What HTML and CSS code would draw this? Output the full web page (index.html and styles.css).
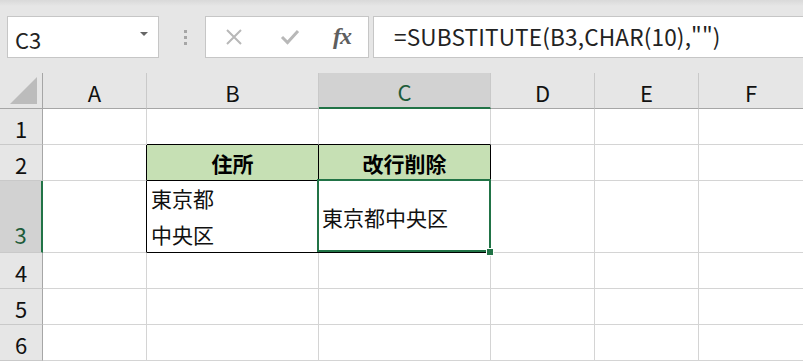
FILE: index.html
```html
<!DOCTYPE html>
<html lang="ja">
<head>
<meta charset="utf-8">
<link rel="stylesheet" href="styles.css">
</head>
<body>
<div class="app">
  <div class="toolbar">
    <div class="namebox"><span class="ref">C3</span><span class="caret"></span></div>
    <div class="grip"><i></i><i></i><i></i></div>
    <div class="fbtns">
      <svg class="ico" width="18" height="18" viewBox="0 0 18 18"><path d="M2 2 L16 16 M16 2 L2 16" stroke="#b8b8b8" stroke-width="2" fill="none"/></svg>
      <svg class="ico" width="20" height="18" viewBox="0 0 20 18"><path d="M2 9 L7.5 14.5 L18 3" stroke="#b8b8b8" stroke-width="3" fill="none"/></svg>
      <span class="fx">fx</span>
    </div>
    <div class="formula">=SUBSTITUTE(B3,CHAR(10),"")</div>
  </div>
  <div class="sheet">
    <div class="hd corner"><svg width="30" height="30" viewBox="0 0 30 30"><polygon points="28,2 28,29 1,29" fill="#bcbcbc"/></svg></div>
    <div class="hd col">A</div>
    <div class="hd col">B</div>
    <div class="hd col sel-col">C</div>
    <div class="hd col">D</div>
    <div class="hd col">E</div>
    <div class="hd col last">F</div>

    <div class="hd row">1</div>
    <div class="c"></div>
    <div class="c bb"></div>
    <div class="c bb"></div>
    <div class="c"></div>
    <div class="c"></div>
    <div class="c last"></div>

    <div class="hd row">2</div>
    <div class="c br"></div>
    <div class="c head bl">住所</div>
    <div class="c head bl">改行削除</div>
    <div class="c"></div>
    <div class="c"></div>
    <div class="c last"></div>

    <div class="hd row sel-row">3</div>
    <div class="c br"></div>
    <div class="c bl multi"><span>東京都</span><span>中央区</span></div>
    <div class="c bl active"><span class="txt">東京都中央区</span><span class="handle"></span></div>
    <div class="c"></div>
    <div class="c"></div>
    <div class="c last"></div>

    <div class="hd row">4</div>
    <div class="c"></div>
    <div class="c"></div>
    <div class="c"></div>
    <div class="c"></div>
    <div class="c"></div>
    <div class="c last"></div>

    <div class="hd row">5</div>
    <div class="c"></div>
    <div class="c"></div>
    <div class="c"></div>
    <div class="c"></div>
    <div class="c"></div>
    <div class="c last"></div>

    <div class="hd row">6</div>
    <div class="c"></div>
    <div class="c"></div>
    <div class="c"></div>
    <div class="c"></div>
    <div class="c"></div>
    <div class="c last"></div>
  </div>
</div>
</body>
</html>
```

FILE: styles.css
```css
* { box-sizing: border-box; }
html, body { margin: 0; padding: 0; }
body {
  width: 803px;
  height: 361px;
  overflow: hidden;
  background: #e6e6e6;
  font-family: "Noto Sans CJK JP", "Noto Sans", sans-serif;
  color: #000;
}
.app { width: 803px; height: 361px; display: flex; flex-direction: column; }

.toolbar {
  height: 73px;
  flex: none;
  display: flex;
  align-items: flex-start;
  padding-top: 16px;
  background: linear-gradient(#d9d9d9 0, #e6e6e6 6px, #e6e6e6 100%);
}
.namebox {
  margin-left: 7px;
  width: 152px;
  height: 42px;
  background: #fff;
  border: 1px solid #c6c6c6;
  display: flex;
  align-items: center;
  justify-content: space-between;
  padding: 0 10px 0 7px;
}
.ref { font-size: 22px; color: #222; line-height: 1; position: relative; top: 2px; }
.caret {
  width: 0; height: 0;
  border-left: 4px solid transparent;
  border-right: 4px solid transparent;
  border-top: 4px solid #666;
  margin-top: -6px;
}
.grip {
  width: 46px;
  height: 42px;
  display: flex;
  flex-direction: column;
  align-items: center;
  justify-content: center;
  gap: 3px;
}
.grip i { display: block; width: 3px; height: 3px; background: #a6a6a6; margin-left: 6px; }
.fbtns {
  width: 164px;
  height: 42px;
  background: #fff;
  border: 1px solid #c6c6c6;
  display: flex;
  align-items: center;
  padding-left: 19px;
}
.fbtns .ico { flex: none; }
.fbtns .ico + .ico { margin-left: 37px; }
.fx {
  margin-left: 33px;
  font-family: "Liberation Serif", "DejaVu Serif", serif;
  font-style: italic;
  font-weight: bold;
  font-size: 24px;
  color: #5e5e5e;
  letter-spacing: -1px;
  position: relative;
  top: -1px;
}
.formula {
  margin-left: 4px;
  flex: 1;
  height: 42px;
  background: #fff;
  border: 1px solid #c6c6c6;
  border-right: none;
  padding-left: 20px;
  font-size: 22.6px;
  letter-spacing: 0.15px;
  line-height: 40px;
  color: #222;
  white-space: nowrap;
}

.sheet {
  flex: 1;
  display: grid;
  grid-template-columns: 43px 104px 172px 172px 104px 104px 104px;
  grid-template-rows: 36px 36px 36px 72px 36px 36px 36px;
  background: #fff;
}
.hd {
  background: #e6e6e6;
  display: flex;
  align-items: center;
  justify-content: center;
  font-size: 22px;
  color: #111;
}
.col {
  border-right: 1px solid #c9c9c9;
  border-bottom: 1px solid #a6a6a6;
  padding-top: 2px;
}
.col.last { border-right: none; }
.corner {
  border-right: 1px solid #a6a6a6;
  border-bottom: 1px solid #a6a6a6;
  align-items: flex-end;
  justify-content: flex-end;
  padding: 0 3px 3px 0;
}
.row {
  border-right: 1px solid #a6a6a6;
  border-bottom: 1px solid #c9c9c9;
  padding-top: 2px;
}
.sel-col {
  background: #d2d2d2;
  border-bottom: 2px solid #217346;
  color: #1e5c3a;
}
.sel-row {
  background: #d2d2d2;
  border-right: 2px solid #217346;
  color: #1e5c3a;
  align-items: flex-end;
  padding-bottom: 2px;
}

.c {
  border-right: 1px solid #d4d4d4;
  border-bottom: 1px solid #d4d4d4;
  font-size: 21px;
  color: #111;
  position: relative;
}
.c.last { border-right: none; }
.c.bb { border-bottom-color: #000; }
.c.br { border-right-color: #000; }
.c.bl { border-right-color: #000; border-bottom-color: #000; }
.head {
  background: #c6e0b4;
  font-weight: bold;
  color: #000;
  display: flex;
  align-items: center;
  justify-content: center;
  padding-top: 1px;
}
.multi {
  display: flex;
  flex-direction: column;
  justify-content: flex-end;
  padding-left: 4px;
}
.multi span { display: block; height: 36px; line-height: 36px; }
.active {
  display: flex;
  align-items: center;
  padding-left: 3px;
}
.active::after {
  content: "";
  position: absolute;
  left: -2px;
  top: -2px;
  right: -1px;
  bottom: 0;
  border: 2px solid #217346;
}
.handle {
  position: absolute;
  left: 167px;
  top: 67px;
  width: 8px;
  height: 8px;
  background: #217346;
  border: 1px solid #fff;
  z-index: 2;
}
```
